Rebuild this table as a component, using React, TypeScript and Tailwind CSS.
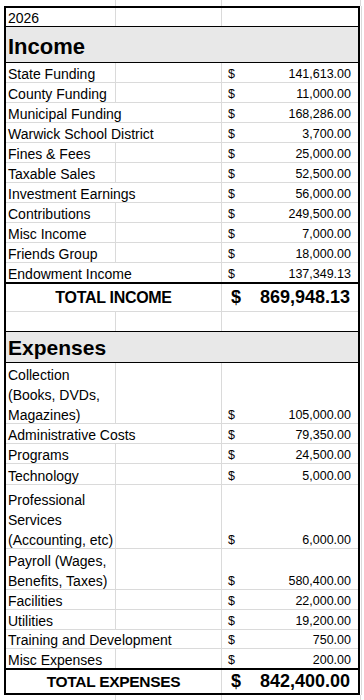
import React from "react";

type RowProps = {
  label: string[];
  amount?: string;
  hClass: string;
  split: boolean;
  border?: boolean;
};

function DataRow({ label, amount, hClass, split, border = true }: RowProps) {
  return (
    <div className={`flex ${hClass} ${border ? "border-b border-[#dadada]" : ""}`}>
      {split ? (
        <>
          <div className="w-[110px] shrink-0 border-r border-[#dadada] flex flex-col justify-end pl-[2px] text-[14px] leading-[20px] whitespace-nowrap">
            {label.map((l, i) => (
              <div key={i} className="translate-y-[2px]">
                {l}
              </div>
            ))}
          </div>
          <div className="w-[106px] shrink-0 border-r border-[#dadada]" />
        </>
      ) : (
        <div className="w-[216px] shrink-0 border-r border-[#dadada] flex items-end pl-[2px] text-[14px] leading-[20px] whitespace-nowrap">
          <div className="translate-y-[2px]">{label[0]}</div>
        </div>
      )}
      <div className="w-[136px] shrink-0 flex items-end justify-between pl-[6px] pr-[7px] text-[12.5px] leading-[20px]">
        {amount !== undefined ? (
          <>
            <span className="translate-y-[2px]">$</span>
            <span className="translate-y-[2px]">{amount}</span>
          </>
        ) : null}
      </div>
    </div>
  );
}

function Strip() {
  return (
    <div className="h-[6px] flex">
      <div className="w-[4px] shrink-0" />
      <div className="w-[112px] shrink-0 border-r border-[#dadada]" />
      <div className="w-[106px] shrink-0 border-r border-[#dadada]" />
      <div className="w-[139px] shrink-0 border-r border-[#dadada]" />
      <div className="flex-1" />
    </div>
  );
}

export default function App() {
  const income: { l: string[]; a: string; s: boolean }[] = [
    { l: ["State Funding"], a: "141,613.00", s: true },
    { l: ["County Funding"], a: "11,000.00", s: true },
    { l: ["Municipal Funding"], a: "168,286.00", s: false },
    { l: ["Warwick School District"], a: "3,700.00", s: false },
    { l: ["Fines & Fees"], a: "25,000.00", s: true },
    { l: ["Taxable Sales"], a: "52,500.00", s: true },
    { l: ["Investment Earnings"], a: "56,000.00", s: false },
    { l: ["Contributions"], a: "249,500.00", s: true },
    { l: ["Misc Income"], a: "7,000.00", s: true },
    { l: ["Friends Group"], a: "18,000.00", s: true },
  ];

  return (
    <div className="w-[364px] h-[700px] bg-white overflow-hidden text-black font-['Liberation_Sans',Arial,sans-serif]">
      <Strip />
      <div className="flex">
        <div className="w-[4px] shrink-0" />
        <div className="w-[356px] shrink-0 border-2 border-black">
          {/* 2026 */}
          <div className="flex h-[19px] border-b border-black">
            <div className="w-[110px] shrink-0 border-r border-[#dadada] flex items-end pl-[2px] text-[14px] leading-[18px]">
              <span className="translate-y-[1px]">2026</span>
            </div>
            <div className="w-[106px] shrink-0 border-r border-[#dadada]" />
            <div className="w-[136px] shrink-0" />
          </div>
          {/* Income header */}
          <div className="h-[36px] bg-[#e8e8e8] border-b border-black flex items-end pl-[2px] pb-[2px]">
            <span className="text-[22px] font-bold leading-[26px]">Income</span>
          </div>
          {income.map((r, i) => (
            <DataRow key={i} label={r.l} amount={r.a} split={r.s} hClass="h-[20px]" />
          ))}
          <DataRow label={["Endowment Income"]} amount="137,349.13" split={false} hClass="h-[19px]" border={false} />
          {/* Total income */}
          <div className="flex h-[30px] border-t-2 border-t-black border-b border-b-[#dadada]">
            <div className="w-[216px] shrink-0 border-r border-[#dadada] flex items-center justify-center text-[16px] font-bold tracking-[-0.3px]">
              TOTAL INCOME
            </div>
            <div className="w-[136px] shrink-0 flex items-center justify-between pl-[9px] pr-[8px] text-[18px] font-bold">
              <span>$</span>
              <span>869,948.13</span>
            </div>
          </div>
          {/* blank */}
          <div className="flex h-[20px] border-b border-black">
            <div className="w-[110px] shrink-0 border-r border-[#dadada]" />
            <div className="w-[106px] shrink-0 border-r border-[#dadada]" />
            <div className="w-[136px] shrink-0" />
          </div>
          {/* Expenses header */}
          <div className="h-[31px] bg-[#e8e8e8] border-b border-black flex items-end pl-[2px] pb-[1px]">
            <span className="text-[21px] font-bold leading-[26px]">Expenses</span>
          </div>
          <DataRow label={["Collection", "(Books, DVDs,", "Magazines)"]} amount="105,000.00" split hClass="h-[61px]" />
          <DataRow label={["Administrative Costs"]} amount="79,350.00" split={false} hClass="h-[20px]" />
          <DataRow label={["Programs"]} amount="24,500.00" split hClass="h-[20px]" />
          <DataRow label={["Technology"]} amount="5,000.00" split hClass="h-[21px]" />
          <DataRow label={["Professional", "Services", "(Accounting, etc)"]} amount="6,000.00" split hClass="h-[64px]" />
          <DataRow label={["Payroll (Wages,", "Benefits, Taxes)"]} amount="580,400.00" split hClass="h-[41px]" />
          <DataRow label={["Facilities"]} amount="22,000.00" split hClass="h-[20px]" />
          <DataRow label={["Utilities"]} amount="19,200.00" split hClass="h-[20px]" />
          <DataRow label={["Training and Development"]} amount="750.00" split={false} hClass="h-[19px]" />
          <DataRow label={["Misc Expenses"]} amount="200.00" split hClass="h-[19px]" border={false} />
          {/* Total expenses */}
          <div className="flex h-[25px] border-t-2 border-black">
            <div className="w-[216px] shrink-0 border-r border-[#dadada] flex items-center justify-center text-[15.5px] font-bold tracking-[-0.3px]">
              TOTAL EXPENSES
            </div>
            <div className="w-[136px] shrink-0 flex items-center justify-between pl-[9px] pr-[8px] text-[18px] font-bold">
              <span>$</span>
              <span>842,400.00</span>
            </div>
          </div>
        </div>
        <div className="w-[4px] shrink-0 flex">
          <div className="w-[1px]" />
          <div className="w-[1px] bg-[#dadada]" />
        </div>
      </div>
      <Strip />
    </div>
  );
}
